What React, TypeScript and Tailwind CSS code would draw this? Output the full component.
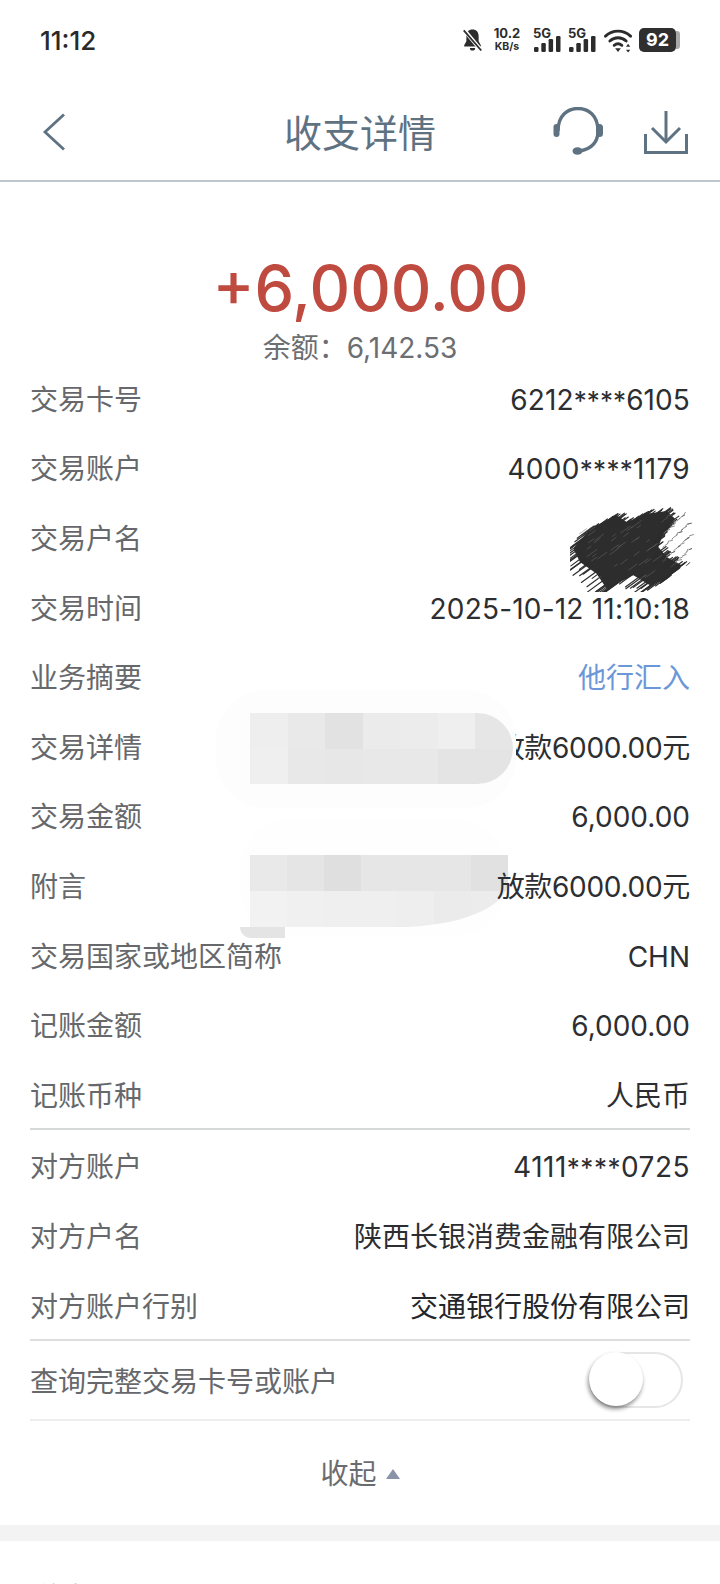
const FONT = "font-['Inter','Noto_Sans_CJK_SC',sans-serif]";

function Row({ label, value, valueClass = "text-[#2c2e31]", h = "h-[69.6px]" }: { label: string; value?: string; valueClass?: string; h?: string }) {
  const parts = value ? value.split("****") : [];
  return (
    <div className={`flex items-center justify-between ${h} text-[28px] leading-none`}>
      <span className="text-[#66686b]">{label}</span>
      {value ? (
        <span className={valueClass}>
          {parts.length === 2 ? (
            <>
              {parts[0]}
              <span className="text-[26px]">****</span>
              {parts[1]}
            </>
          ) : (
            value
          )}
        </span>
      ) : null}
    </div>
  );
}

function Signal() {
  return (
    <div className="relative w-[27px] h-[24px]">
      <span className="absolute -left-[1px] -top-[1px] text-[13px] leading-none font-bold text-[#2c2c2c]">5G</span>
      <svg viewBox="0 0 27 24" className="absolute inset-0 w-[27px] h-[24px]">
        <rect x="0" y="19" width="4.500" height="5" rx="1.200" fill="#2c2c2c" />
        <rect x="7.300" y="15" width="4.500" height="9" rx="1.200" fill="#2c2c2c" />
        <rect x="14.600" y="11" width="4.500" height="13" rx="1.200" fill="#2c2c2c" />
        <rect x="22" y="8" width="4.500" height="16" rx="1.200" fill="#2c2c2c" />
      </svg>
    </div>
  );
}

function StatusBar() {
  return (
    <div className="flex items-center justify-between h-[80px] pl-[40px] pr-[40px]">
      <span className="text-[26px] font-medium text-[#2a2a2a]">11:12</span>
      <div className="flex items-center">
        <svg viewBox="0 0 24 26" className="w-[21px] h-[24px] mr-[10px]">
          <path d="M12 1c-4.500 0-7 3-7 7.500v6L2.500 19v1.500h19V19L19 14.500v-6C19 4 16.500 1 12 1z" fill="#2c2c2c" />
          <path d="M9 22h6a3 3 0 0 1-6 0z" fill="#2c2c2c" />
          <path d="M2 1l20 24" stroke="#fff" strokeWidth="4.500" />
          <path d="M2 2l20 23" stroke="#2c2c2c" strokeWidth="2" />
        </svg>
        <div className="flex flex-col items-center w-[28px] mr-[13px] text-[#2c2c2c] font-bold leading-none">
          <span className="text-[13px]">10.2</span>
          <span className="text-[10.500px] mt-[2px]">KB/s</span>
        </div>
        <Signal />
        <div className="w-[8px]" />
        <Signal />
        <svg viewBox="0 0 30 26" className="w-[29px] h-[25px] ml-[8px] mr-[6px]">
          <path d="M1.500 8.500C9 1.500 20 1.500 27.500 8.500" fill="none" stroke="#2c2c2c" strokeWidth="3" strokeLinecap="round" />
          <path d="M6 13.500C11 9 18 9 23 13.500" fill="none" stroke="#2c2c2c" strokeWidth="3" strokeLinecap="round" />
          <path d="M10.500 18C13 16 16 16 18.500 18" fill="none" stroke="#2c2c2c" strokeWidth="3" strokeLinecap="round" />
          <path d="M11.500 21h6l-3 4z" fill="#2c2c2c" />
          <path d="M25 16.500l2.200 3h-4.400zM25 25.500l2.200-3h-4.400z" fill="#2c2c2c" />
        </svg>
        <div className="flex items-center">
          <div className="w-[37px] h-[24px] rounded-[5px] bg-[#2f2f2f] text-white text-[18px] font-bold leading-none flex items-center justify-center">92</div>
          <div className="w-[4px] h-[18px] rounded-r-[3px] bg-[#a8a8a8]" />
        </div>
      </div>
    </div>
  );
}

function Header() {
  return (
    <div className="relative flex items-center justify-center h-[102px] border-b-2 border-[#bdc8cc]">
      <span className="text-[38px] text-[#5f7282] leading-none mt-[6px]">收支详情</span>
      <svg viewBox="0 0 24 38" className="absolute left-[42px] top-[33px] w-[24px] h-[38px]" fill="none" stroke="#5f7282" strokeWidth="2.800">
        <path d="M22 1.500 L3 19 L22 36.500" />
      </svg>
      <svg viewBox="0 0 50 50" className="absolute left-[553px] top-[27px] w-[50px] h-[50px]" fill="none" stroke="#5f7282">
        <path d="M5 24C5 8 15 1.500 25 1.500S45 8 45 24C45 36 37 42 27 44" strokeWidth="3.400" />
        <rect x="0.500" y="17" width="6" height="13" rx="3" fill="#5f7282" stroke="none" />
        <rect x="43" y="17" width="7" height="13" rx="3.500" fill="#5f7282" stroke="none" />
        <ellipse cx="24.500" cy="44" rx="5" ry="3.800" fill="#5f7282" stroke="none" />
      </svg>
      <svg viewBox="0 0 44 43" className="absolute left-[644px] top-[31px] w-[44px] h-[43px]" fill="none" stroke="#5f7282" strokeWidth="3">
        <path d="M22 0v31" />
        <path d="M8 17l14 14 14-14" />
        <path d="M1.500 23v18.500h41V23" />
      </svg>
    </div>
  );
}

function Scribble() {
  let seed = 17;
  const rnd = () => {
    seed = (seed * 137 + 59) % 1000;
    return seed / 1000;
  };
  const anchors: [number, number][] = [
    [1120, 175], [1170, 115], [1250, 75], [1280, 95], [1340, 70], [1400, 62], [1425, 85], [1390, 130],
    [1375, 170], [1400, 200], [1445, 225], [1400, 265], [1350, 285], [1300, 255], [1220, 295], [1190, 250], [1140, 215],
  ];
  const hatch: string[] = [];
  for (let i = 0; i < 120; i++) {
    const a = anchors[i % anchors.length];
    const b = anchors[(i + 1) % anchors.length];
    const t = rnd();
    const x = a[0] + (b[0] - a[0]) * t;
    const y = a[1] + (b[1] - a[1]) * t;
    const len = 15 + rnd() * 28;
    hatch.push(`M${x - len} ${y + len * 0.72}L${x + len * 0.4} ${y - len * 0.3}`);
  }
  const specks: string[] = [];
  for (let i = 0; i < 60; i++) {
    const x = 1385 + rnd() * 85;
    const y = 70 + rnd() * 160;
    specks.push(`M${x} ${y}l${3 + rnd() * 9} ${-2 - rnd() * 6}`);
  }
  const scratches: string[] = [];
  for (let i = 0; i < 40; i++) {
    const x = 1130 + rnd() * 230;
    const y = 110 + rnd() * 160;
    const len = 8 + rnd() * 22;
    scratches.push(`M${x} ${y}l${len} ${-len * 0.72}`);
  }
  return (
    <svg viewBox="1110 50 375 255" className="absolute left-[570px] top-[507px] w-[125px] h-[85px]" fill="none" strokeLinecap="round">
      <path
        d="M1120 175L1170 115L1250 75L1280 95L1340 70L1400 62L1425 85L1390 130L1375 170L1400 200L1445 225L1400 265L1350 285L1300 255L1220 295L1190 250L1140 215Z"
        fill="#2d2d2d"
      />
      <g stroke="#2d2d2d" strokeWidth="3.500">
        {hatch.map((d, i) => <path key={i} d={d} />)}
      </g>
      <g stroke="#555555" strokeWidth="2">
        {specks.map((d, i) => <path key={i} d={d} />)}
      </g>
      <g stroke="#6a6a6a" strokeWidth="1.500">
        {scratches.map((d, i) => <path key={i} d={d} />)}
      </g>
    </svg>
  );
}

function Mosaic({ className, cells }: { className: string; cells: string[][] }) {
  return (
    <div className={`absolute grid grid-cols-7 ${className}`}>
      {cells.flat().map((c, i) => <div key={i} style={{ backgroundColor: c }} />)}
    </div>
  );
}

export default function App() {
  return (
    <div className={`relative w-[720px] h-[1584px] overflow-hidden bg-white ${FONT}`}>
      <StatusBar />
      <Header />

      <div className="flex flex-col items-center pt-[71px] h-[185px]">
        <div className="text-[63px] font-medium text-[#bf4a3f] leading-[70px] ml-[21px]">+6,000.00</div>
        <div className="text-[28px] text-[#6c6e71] leading-none mt-[11px]">余额：6,142.53</div>
      </div>

      <div className="px-[30px]">
        <div className="-mt-[2px]">
          <Row label="交易卡号" value="6212****6105" valueClass="text-[#2c2e31] tracking-[0.1px]" />
          <Row label="交易账户" value="4000****1179" valueClass="text-[#2c2e31] tracking-[0.3px]" />
          <Row label="交易户名" />
          <Row label="交易时间" value="2025-10-12 11:10:18" valueClass="text-[#2c2e31] tracking-[0.2px]" />
          <Row label="业务摘要" value="他行汇入" valueClass="text-[#6b97d9]" />
          <Row label="交易详情" value="放款6000.00元" valueClass="text-[#2c2e31] -tracking-[0.3px]" />
          <Row label="交易金额" value="6,000.00" />
          <Row label="附言" value="放款6000.00元" valueClass="relative z-10 text-[#2c2e31] -tracking-[0.3px]" />
          <Row label="交易国家或地区简称" value="CHN" />
          <Row label="记账金额" value="6,000.00" />
          <Row label="记账币种" value="人民币" />
        </div>
        <div className="border-t-2 border-[#d6d9da] -mt-[3px] pt-[3px]">
          <Row label="对方账户" value="4111****0725" valueClass="text-[#2c2e31] tracking-[0.5px]" />
          <Row label="对方户名" value="陕西长银消费金融有限公司" />
          <Row label="对方账户行别" value="交通银行股份有限公司" valueClass="text-[#24262a]" />
        </div>
        <div className="-mt-[2px] border-t-2 border-[#dcdedf] border-b-2 border-b-[#eeeeee] h-[82px] flex items-center justify-between">
          <span className="mt-[4px] text-[28px] text-[#66686b] leading-none">查询完整交易卡号或账户</span>
          <div className="relative w-[94px] h-[56px] mr-[7px] rounded-full bg-white border-2 border-[#e6e6e6]">
            <div className="absolute -left-[2px] -top-[2px] w-[54px] h-[54px] rounded-full bg-white shadow-[-1px_3px_4px_rgba(0,0,0,0.45)]" />
          </div>
        </div>
      </div>

      <div className="flex items-center justify-center gap-[9px] h-[104px] pt-[2px] text-[28px] text-[#6a6c6f] leading-none">
        <span>收起</span>
        <svg viewBox="0 0 14 10" className="w-[14px] h-[10px]"><path d="M7 0l7 10H0z" fill="#8a93a8" /></svg>
      </div>
      <div className="h-[16px] bg-[#f3f3f3]" />
      <div className="flex items-start gap-[25px] px-[30px] pt-[43px] text-[28px] text-[#66686b] leading-none">
        <span>详情设置</span>
        <span className="w-[22px] h-[22px] rounded-full bg-[#5b8fd6]" />
      </div>

      <Scribble />
      <div className="absolute left-[216px] top-[690px] w-[300px] h-[118px] rounded-[50px] bg-[#fdfdfd]" />
      <Mosaic
        className="left-[250px] top-[713px] w-[263px] h-[71px] grid-rows-2 rounded-r-[36px] overflow-hidden"
        cells={[
          ["#eeeeee", "#e9e9e9", "#e2e2e2", "#ebebeb", "#ececec", "#efefef", "#e6e6e6"],
          ["#efefef", "#e8e8e8", "#e7e7e7", "#e8e8e8", "#e8e8e8", "#e4e4e4", "#e4e4e4"],
        ]}
      />
      <div className="absolute left-[240px] top-[820px] w-[266px] h-[116px] rounded-[50px] bg-[#fefefe]" />
      <Mosaic
        className="left-[250px] top-[855px] w-[258px] h-[72px] grid-rows-2 rounded-br-[110px_45px] overflow-hidden"
        cells={[
          ["#e9e9e9", "#e5e5e5", "#dfdfdf", "#e6e6e6", "#e6e6e6", "#e6e6e6", "#e1e1e1"],
          ["#f2f2f2", "#f0f0f0", "#efefef", "#efefef", "#eeeeee", "#ebebeb", "#ececec"],
        ]}
      />
      <div className="absolute left-[240px] top-[927px] w-[45px] h-[11px] rounded-bl-[14px] bg-[#e4e4e4]" />
    </div>
  );
}
